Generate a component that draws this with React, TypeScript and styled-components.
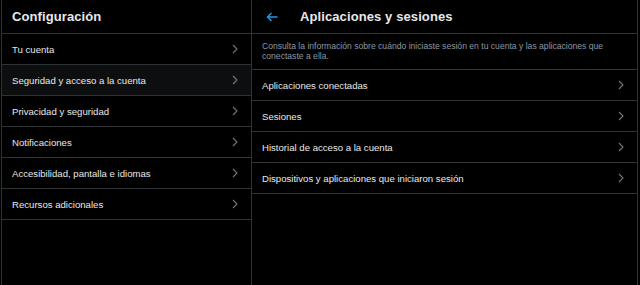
import React, { FC } from 'react';
import styled, { createGlobalStyle } from 'styled-components';

const GlobalStyle = createGlobalStyle`
    html, body {
        margin: 0;
        padding: 0;
        background: #000;
    }
    body {
        font-family: "Liberation Sans", Arial, sans-serif;
        color: #e7e9ea;
    }
`;

const BORDER = '#2f3336';

const Shell = styled.div`
    display: flex;
    height: 285px;
    padding: 0 2px 0 1px;
    background: #000;
    box-sizing: border-box;
    overflow: hidden;
`;

const Panel = styled.section<{ $wide?: boolean }>`
    display: flex;
    flex-direction: column;
    border-right: 1px solid ${BORDER};
    ${({ $wide }) => ($wide ? 'flex: 1;' : `width: 249px; border-left: 1px solid ${BORDER};`)}
`;

const Header = styled.header`
    display: flex;
    align-items: center;
    height: 33px;
    padding: 0 10px;
    border-bottom: 1px solid ${BORDER};
    gap: 22px;
`;

const Title = styled.h1`
    margin: 0;
    font-size: 13px;
    font-weight: 700;
    color: #e7e9ea;
    letter-spacing: 0.1px;
`;

const BackButton = styled.button`
    display: flex;
    align-items: center;
    background: none;
    border: 0;
    padding: 0 0 0 4px;
    cursor: pointer;
`;

const Description = styled.p`
    margin: 0;
    padding: 7px 10px 8px;
    font-size: 8.6px;
    line-height: 10px;
    color: #8b98a5;
    border-bottom: 1px solid ${BORDER};
`;

const List = styled.ul`
    list-style: none;
    margin: 0;
    padding: 0;
`;

const Row = styled.li<{ $active?: boolean }>`
    display: flex;
    align-items: center;
    justify-content: space-between;
    height: 30px;
    padding: 0 13px 0 10px;
    border-bottom: 1px solid ${BORDER};
    background: ${({ $active }) => ($active ? '#0d0e0f' : 'transparent')};
    font-size: 9.6px;
    color: #e7e9ea;
    cursor: pointer;
`;

const Chevron: FC = () => (
    <svg width="6" height="10" viewBox="0 0 6 10" fill="none">
        <path d="M1 1 L5 5 L1 9" stroke="#71767b" strokeWidth="1.1" />
    </svg>
);

const BackArrow: FC = () => (
    <svg width="12" height="10" viewBox="0 0 12 10" fill="none">
        <path d="M11.5 5 H1.5 M5.5 1 L1.5 5 L5.5 9" stroke="#1d9bf0" strokeWidth="1.4" />
    </svg>
);

const settings = [
    'Tu cuenta',
    'Seguridad y acceso a la cuenta',
    'Privacidad y seguridad',
    'Notificaciones',
    'Accesibilidad, pantalla e idiomas',
    'Recursos adicionales',
];

const sessions = [
    'Aplicaciones conectadas',
    'Sesiones',
    'Historial de acceso a la cuenta',
    'Dispositivos y aplicaciones que iniciaron sesión',
];

const App: FC = () => (
    <>
        <GlobalStyle />
        <Shell>
            <Panel>
                <Header>
                    <Title>Configuración</Title>
                </Header>
                <List>
                    {settings.map((label, i) => (
                        <Row key={label} $active={i === 1}>
                            <span>{label}</span>
                            <Chevron />
                        </Row>
                    ))}
                </List>
            </Panel>
            <Panel $wide>
                <Header>
                    <BackButton aria-label="Atrás">
                        <BackArrow />
                    </BackButton>
                    <Title>Aplicaciones y sesiones</Title>
                </Header>
                <Description>
                    Consulta la información sobre cuándo iniciaste sesión en tu cuenta y las aplicaciones que
                    conectaste a ella.
                </Description>
                <List>
                    {sessions.map((label) => (
                        <Row key={label}>
                            <span>{label}</span>
                            <Chevron />
                        </Row>
                    ))}
                </List>
            </Panel>
        </Shell>
    </>
);

export default App;
